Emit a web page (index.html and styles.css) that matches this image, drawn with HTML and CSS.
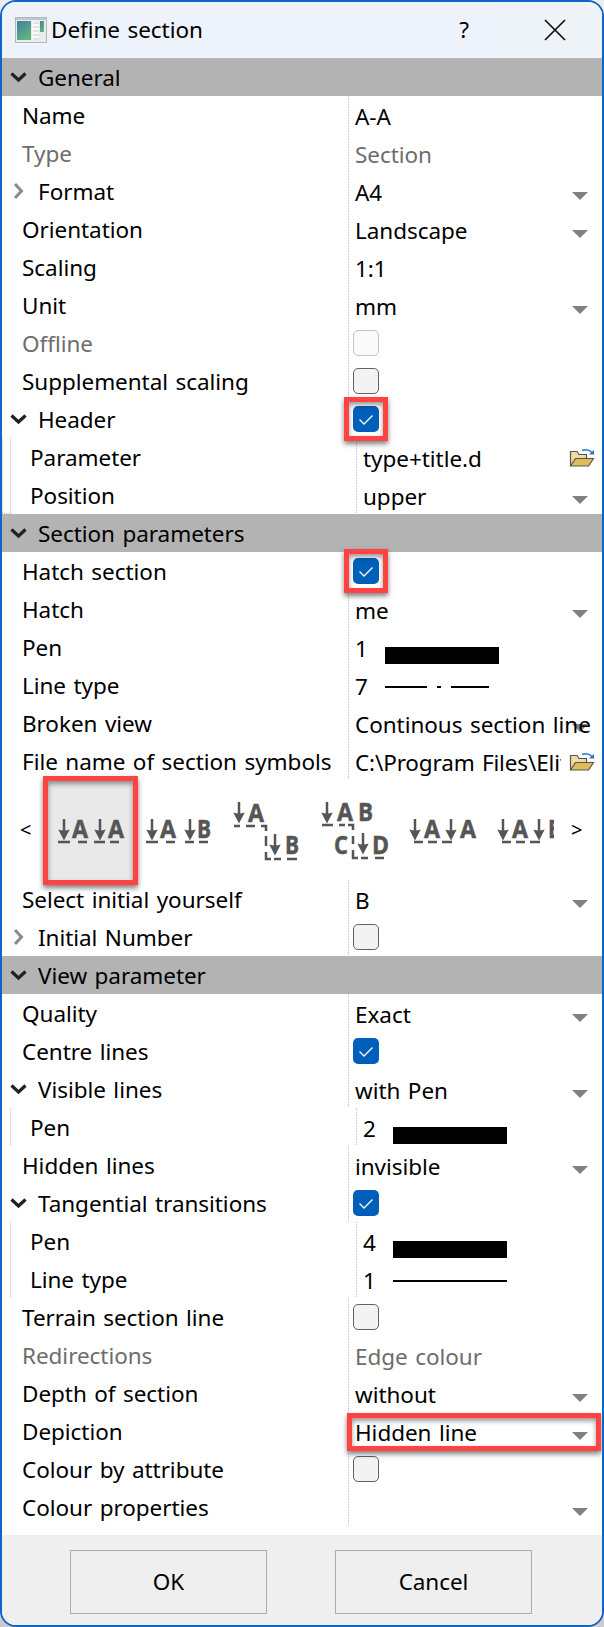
FILE: index.html
```html
<!DOCTYPE html>
<html lang="en">
<head>
    <meta charset="UTF-8">
    <title>Define section</title>
    <link rel="stylesheet" href="styles.css">
</head>
<body>
    <svg class="defs" width="0" height="0">
        <defs>
            <symbol id="check" viewBox="0 0 26 26"><path d="M6.500 13.500l4.500 4.500 8.500-8.500" fill="none" stroke="#fff" stroke-width="1.300"/></symbol>
            <symbol id="down" viewBox="0 0 18 12"><path d="M1.500 2.500l7 6.500 7-6.500" fill="none" stroke="#222" stroke-width="3.200"/></symbol>
            <symbol id="right" viewBox="0 0 12 18"><path d="M2 2l6.500 7L2 16" fill="none" stroke="#8a8a8a" stroke-width="3"/></symbol>
            <symbol id="folder" viewBox="0 0 26 20">
                <path d="M1.500 18V3.500h6.500l2 3h7.500v4" fill="#eddca4" stroke="#555" stroke-width="1.200"/>
                <path d="M1.500 18l5-7.500h18L19.500 18z" fill="#dfbd5c" stroke="#555" stroke-width="1.200"/>
                <path d="M13 2.500q6-2 10 2" fill="none" stroke="#2b6fd0" stroke-width="1.500"/>
                <path d="M25 2v4.500h-5z" fill="#2b6fd0"/>
            </symbol>
            <symbol id="arrow" viewBox="0 0 12 24"><path d="M6 0v14" stroke="#555" stroke-width="2.500"/><path d="M0.300 10.500q5.700 2 11.400 0L6 21.500z" fill="#555"/></symbol>
        </defs>
    </svg>
    <div class="dialog">
        <div class="titlebar">
            <svg class="app-icon" width="32" height="26" viewBox="0 0 32 26">
                <defs><linearGradient id="g" x2="0.600" y2="1"><stop offset="0" stop-color="#3f7fa6"/><stop offset="1" stop-color="#62b57c"/></linearGradient></defs>
                <rect x="0.500" y="0.500" width="31" height="25" fill="#e9ebed" stroke="#b3b8be"/>
                <path d="M1 2h30" stroke="#c3c7cc" stroke-width="2"/>
                <rect x="2" y="4" width="14" height="19" fill="url(#g)"/>
                <rect x="17" y="4" width="7" height="19" fill="#fafafa"/>
                <path d="M18 6h6M18 10h6M18 14h6M18 18h6M18 22h6" stroke="#c6cacd"/>
                <rect x="25" y="4" width="4" height="11" fill="url(#g)"/>
            </svg>
            <span class="title">Define section</span>
            <span class="help">?</span>
            <svg class="close" width="22" height="22" viewBox="0 0 22 22"><path d="M1 1l20 20M21 1L1 21" stroke="#111" stroke-width="1.700"/></svg>
        </div>

        <div class="section"><svg class="chev"><use href="#down"/></svg>General</div>
        <div class="row"><div class="label">Name</div><div class="value">A-A</div></div>
        <div class="row disabled"><div class="label">Type</div><div class="value">Section</div></div>
        <div class="row"><div class="label group"><svg class="chev-r"><use href="#right"/></svg>Format</div><div class="value">A4<i class="drop"></i></div></div>
        <div class="row"><div class="label">Orientation</div><div class="value">Landscape<i class="drop"></i></div></div>
        <div class="row"><div class="label">Scaling</div><div class="value">1:1</div></div>
        <div class="row"><div class="label">Unit</div><div class="value">mm<i class="drop"></i></div></div>
        <div class="row disabled"><div class="label">Offline</div><div class="value"><span class="box"></span></div></div>
        <div class="row"><div class="label">Supplemental scaling</div><div class="value"><span class="box"></span></div></div>
        <div class="row"><div class="label group"><svg class="chev"><use href="#down"/></svg>Header</div><div class="value"><span class="box on marked"><svg><use href="#check"/></svg></span></div></div>
        <div class="row child outer"><div class="label">Parameter</div><div class="value">type+title.d<svg class="folder"><use href="#folder"/></svg></div></div>
        <div class="row child outer last"><div class="label">Position</div><div class="value">upper<i class="drop"></i></div></div>

        <div class="section"><svg class="chev"><use href="#down"/></svg>Section parameters</div>
        <div class="row"><div class="label">Hatch section</div><div class="value"><span class="box on marked"><svg><use href="#check"/></svg></span></div></div>
        <div class="row"><div class="label">Hatch</div><div class="value">me<i class="drop"></i></div></div>
        <div class="row"><div class="label">Pen</div><div class="value"><span class="num">1</span><span class="pen"></span></div></div>
        <div class="row"><div class="label">Line type</div><div class="value"><span class="num">7</span><svg class="line" width="114" height="2"><path d="M0 1h42M52 1h4M66 1h38" stroke="#000" stroke-width="2"/></svg></div></div>
        <div class="row"><div class="label">Broken view</div><div class="value"><span class="over">Continous section line</span><i class="drop"></i></div></div>
        <div class="row"><div class="label">File name of section symbols</div><div class="value"><span class="path">C:\Program Files\Elite</span><svg class="folder"><use href="#folder"/></svg></div></div>

        <div class="symbols">
            <span class="nav">&lt;</span>
            <div class="strip">
                <div class="symbol selected">
                    <svg width="88" height="100">
                        <use href="#arrow" x="11" y="39" width="12" height="24"/><use href="#arrow" x="47" y="39" width="12" height="24"/>
                        <text x="25" y="58" textLength="16" lengthAdjust="spacingAndGlyphs">A</text><text x="61" y="58" textLength="16" lengthAdjust="spacingAndGlyphs">A</text>
                        <path d="M11 62h12M31 62h9M47 62h11M63 62h9"/>
                    </svg>
                </div>
                <div class="symbol">
                    <svg width="88" height="100">
                        <use href="#arrow" x="11" y="39" width="12" height="24"/><use href="#arrow" x="49" y="39" width="12" height="24"/>
                        <text x="25" y="58" textLength="16" lengthAdjust="spacingAndGlyphs">A</text><text x="62" y="58" textLength="14" lengthAdjust="spacingAndGlyphs">B</text>
                        <path d="M11 62h12M31 62h9M50 62h9M64 62h9"/>
                    </svg>
                </div>
                <div class="symbol">
                    <svg width="88" height="100">
                        <use href="#arrow" x="10" y="22" width="12" height="24"/><use href="#arrow" x="46" y="54" width="12" height="24"/>
                        <text x="25" y="42" textLength="16" lengthAdjust="spacingAndGlyphs">A</text><text x="62" y="74" textLength="14" lengthAdjust="spacingAndGlyphs">B</text>
                        <path d="M11 46h6M23 46h9M38 46h5v5M43 56v10M43 72v7h5M51 79h7M64 79h10"/>
                    </svg>
                </div>
                <div class="symbol">
                    <svg width="88" height="100">
                        <use href="#arrow" x="10" y="22" width="12" height="24"/><use href="#arrow" x="46" y="53" width="12" height="24"/>
                        <text x="26" y="41" textLength="16" lengthAdjust="spacingAndGlyphs">A</text><text x="47" y="41" textLength="15" lengthAdjust="spacingAndGlyphs">B</text>
                        <text x="23" y="74" textLength="14" lengthAdjust="spacingAndGlyphs">C</text><text x="61" y="74" textLength="17" lengthAdjust="spacingAndGlyphs">D</text>
                        <path d="M11 45h11M28 45h6M37 45h5v5M42 56v8M42 70v8h5M50 78h7M64 78h9"/>
                    </svg>
                </div>
                <div class="symbol">
                    <svg width="88" height="100">
                        <use href="#arrow" x="10" y="39" width="12" height="24"/><use href="#arrow" x="46" y="39" width="12" height="24"/>
                        <text x="25" y="58" textLength="16" lengthAdjust="spacingAndGlyphs">A</text><text x="61" y="58" textLength="16" lengthAdjust="spacingAndGlyphs">A</text>
                        <path d="M15 62h9M29 62h9M43 62h10"/>
                    </svg>
                </div>
                <div class="symbol">
                    <svg width="88" height="100">
                        <use href="#arrow" x="10" y="39" width="12" height="24"/><use href="#arrow" x="46" y="39" width="12" height="24"/>
                        <text x="25" y="58" textLength="16" lengthAdjust="spacingAndGlyphs">A</text><text x="61" y="58" textLength="14" lengthAdjust="spacingAndGlyphs">B</text>
                        <path d="M15 62h9M29 62h9M43 62h10"/>
                    </svg>
                </div>
            </div>
            <span class="nav">&gt;</span>
        </div>

        <div class="row"><div class="label">Select initial yourself</div><div class="value">B<i class="drop"></i></div></div>
        <div class="row"><div class="label group"><svg class="chev-r"><use href="#right"/></svg>Initial Number</div><div class="value"><span class="box"></span></div></div>

        <div class="section"><svg class="chev"><use href="#down"/></svg>View parameter</div>
        <div class="row"><div class="label">Quality</div><div class="value">Exact<i class="drop"></i></div></div>
        <div class="row"><div class="label">Centre lines</div><div class="value"><span class="box on"><svg><use href="#check"/></svg></span></div></div>
        <div class="row"><div class="label group"><svg class="chev"><use href="#down"/></svg>Visible lines</div><div class="value">with Pen<i class="drop"></i></div></div>
        <div class="row child"><div class="label">Pen</div><div class="value"><span class="num">2</span><span class="pen"></span></div></div>
        <div class="row"><div class="label">Hidden lines</div><div class="value">invisible<i class="drop"></i></div></div>
        <div class="row"><div class="label group"><svg class="chev"><use href="#down"/></svg>Tangential transitions</div><div class="value"><span class="box on"><svg><use href="#check"/></svg></span></div></div>
        <div class="row child"><div class="label">Pen</div><div class="value"><span class="num">4</span><span class="pen"></span></div></div>
        <div class="row child"><div class="label">Line type</div><div class="value"><span class="num">1</span><svg class="line" width="114" height="2"><path d="M0 1h114" stroke="#000" stroke-width="2"/></svg></div></div>
        <div class="row"><div class="label">Terrain section line</div><div class="value"><span class="box"></span></div></div>
        <div class="row disabled"><div class="label">Redirections</div><div class="value">Edge colour</div></div>
        <div class="row"><div class="label">Depth of section</div><div class="value">without<i class="drop"></i></div></div>
        <div class="row"><div class="label">Depiction</div><div class="value framed">Hidden line<i class="drop"></i></div></div>
        <div class="row"><div class="label">Colour by attribute</div><div class="value"><span class="box"></span></div></div>
        <div class="row"><div class="label">Colour properties</div><div class="value"><i class="drop"></i></div></div>

        <div class="footer">
            <button>OK</button>
            <button>Cancel</button>
        </div>
    </div>
</body>
</html>
```
FILE: styles.css
```css
* {
    box-sizing: border-box;
}

body {
    margin: 0;
    background: linear-gradient(#ececec, #cccccc);
    font-family: "Noto Sans", "Open Sans", sans-serif;
    font-size: 22.5px;
    letter-spacing: -0.05px;
    word-spacing: 1.7px;
    color: #000;
}

.defs {
    position: absolute;
}

.dialog {
    width: 604px;
    height: 1627px;
    border: 2px solid #1064c8;
    border-radius: 16px;
    background: #fff;
    overflow: hidden;
    display: flex;
    flex-direction: column;
}

.titlebar {
    height: 56px;
    flex: none;
    display: flex;
    align-items: center;
    padding: 0 36px 1px 13px;
    background: linear-gradient(to right, #eef3fb 80%, #edf3f6);
}

.title {
    margin-left: 4px;
    flex: 1;
}

.help {
    margin-right: 75px;
}

.section {
    height: 38px;
    flex: none;
    display: flex;
    align-items: center;
    padding-left: 8px;
    background: #b3b3b3;
}

.chev {
    width: 18px;
    height: 12px;
    margin-right: 10px;
    flex: none;
}

.chev-r {
    width: 12px;
    height: 18px;
    margin: 0 13px 0 3px;
    flex: none;
}

.row {
    height: 38px;
    flex: none;
    display: flex;
    white-space: nowrap;
}

.label {
    width: 346px;
    flex: none;
    display: flex;
    align-items: center;
    padding-left: 20px;
}

.label.group {
    padding-left: 8px;
}

.value {
    flex: 1;
    min-width: 0;
    position: relative;
    display: flex;
    align-items: center;
    padding: 2px 0 0 7px;
}

/* dotted column divider */
.value::before {
    content: "";
    position: absolute;
    left: 0;
    top: 0;
    width: 1px;
    height: 37px;
    background: repeating-linear-gradient(#c0c0c0 0 1px, transparent 1px 2px);
}

.child .label {
    width: 354px;
    padding-left: 28px;
    background: repeating-linear-gradient(#c8c8c8 0 1px, transparent 1px 2px) 8px 0 / 1px 37px no-repeat;
}

.outer .label {
    background:
        repeating-linear-gradient(#c8c8c8 0 1px, transparent 1px 2px) 0 0 / 1px 100% no-repeat,
        repeating-linear-gradient(#c8c8c8 0 1px, transparent 1px 2px) 8px 0 / 1px 100% no-repeat;
}

.outer.last .label {
    background:
        repeating-linear-gradient(#c8c8c8 0 1px, transparent 1px 2px) 0 0 / 1px 100% no-repeat,
        repeating-linear-gradient(#c8c8c8 0 1px, transparent 1px 2px) 8px 0 / 1px 100% no-repeat,
        repeating-linear-gradient(to right, #c8c8c8 0 1px, transparent 1px 2px) 0 37px / 9px 1px no-repeat;
}

.disabled {
    color: #6d6d6d;
}

.drop {
    margin: 8px 14px 0 auto;
    border: 8px solid transparent;
    border-top-color: #808080;
    border-bottom: 0;
}

.box {
    width: 26px;
    height: 26px;
    margin: -2px 0 0 -2px;
    border: 1.5px solid #626262;
    border-radius: 5px;
    background: #f3f3f3;
    position: relative;
}

.disabled .box {
    border-color: #c4c4c4;
    background: #fafafa;
}

.box.on {
    border: 0;
    background: #005fb8;
}

.box svg {
    display: block;
    width: 26px;
    height: 26px;
}

.marked::after,
.framed::after,
.selected::after {
    content: "";
    position: absolute;
    inset: -9px;
    border: 5px solid #ff4343;
    box-shadow: 0 3px 5px rgba(0, 0, 0, 0.5), inset 0 3px 5px rgba(0, 0, 0, 0.4);
    z-index: 1;
}

.framed::after {
    inset: 1px 1px -1px -1px;
}

.selected::after {
    inset: -4px -3px -5px -4px;
}

.folder {
    width: 26px;
    height: 20px;
    margin: 0 7px 0 auto;
    flex: none;
}

.num {
    width: 30px;
}

.pen {
    width: 114px;
    height: 17px;
    margin-top: 15px;
    background: #000;
}

.line {
    margin-top: 2px;
}

.over {
    margin-right: -40px;
    z-index: 1;
}

.path {
    width: 206px;
    overflow: hidden;
    letter-spacing: -0.15px;
}

.symbols {
    height: 100px;
    flex: none;
    display: flex;
    align-items: center;
    padding-left: 18px;
}

.nav {
    width: 27px;
    font-size: 20px;
    padding-bottom: 2px;
}

.strip {
    width: 507px;
    height: 100px;
    margin-right: 17px;
    display: flex;
    clip-path: inset(-10px 0 -14px -10px);
}

.symbol {
    width: 88px;
    height: 100px;
    flex: none;
    position: relative;
}

.selected {
    background: linear-gradient(#e9e9e9, #e9e9e9) 0 0 / 86px 100% no-repeat;
}

.symbol svg {
    display: block;
}

.symbol text {
    font: bold 25px "Open Sans", sans-serif;
    fill: #555;
    stroke: #555;
    stroke-width: 0.5px;
}

.symbol path {
    fill: none;
    stroke: #555;
    stroke-width: 2.5px;
}

.footer {
    flex: 1;
    margin-top: 9px;
    padding: 15px 0 0 68px;
    display: flex;
    gap: 68px;
    background: #efefef;
}

button {
    width: 197px;
    height: 64px;
    padding: 0 0 2px;
    border: 1px solid #acacac;
    background: #efefef;
    font: inherit;
    letter-spacing: inherit;
    color: #000;
}
```
